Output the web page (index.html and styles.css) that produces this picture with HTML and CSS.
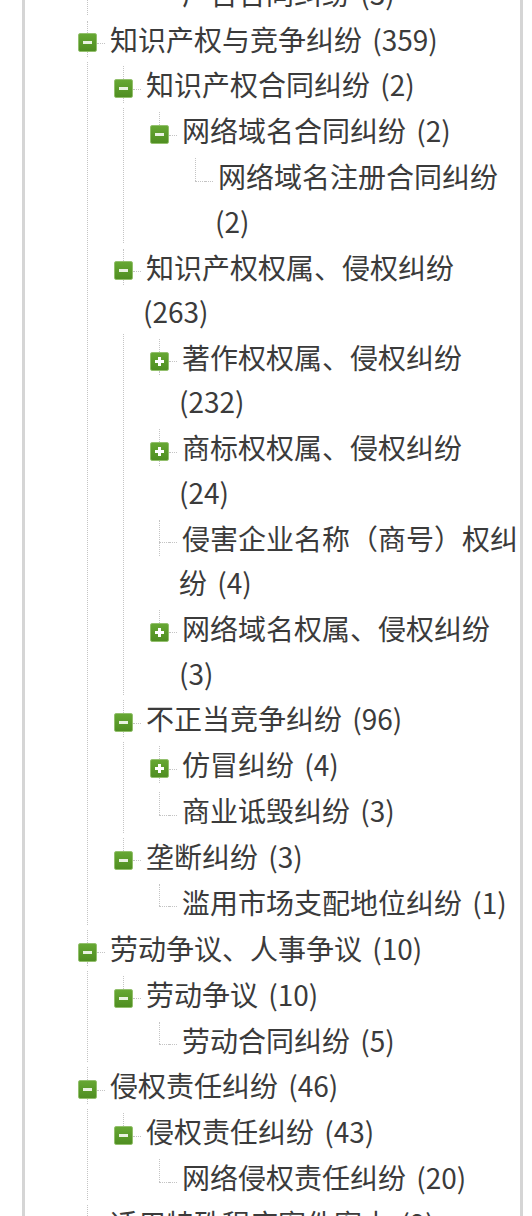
FILE: index.html
```html
<!DOCTYPE html>
<html lang="zh-CN">
<head>
<meta charset="utf-8">
<title>案由树</title>
<link rel="stylesheet" href="styles.css">
</head>
<body>
<div class="panel">
<ul class="tree">
  <li class="node">
    <ul class="line">
      <li class="node last">
        <ul>
          <li class="node leaf last"><div class="row"><span class="sw"><i class="up"></i><i class="mid"></i><i class="dn"></i></span><span class="h"></span><span class="txt">广告合同纠纷 (3)</span></div></li>
        </ul>
      </li>
    </ul>
  </li>

  <li class="node">
    <div class="row"><span class="sw"><i class="up"></i><b class="box minus"></b><i class="dn"></i></span><span class="h"></span><span class="txt">知识产权与竞争纠纷 (359)</span></div>
    <ul class="line">
      <li class="node">
        <div class="row"><span class="sw"><i class="up"></i><b class="box minus"></b><i class="dn"></i></span><span class="h"></span><span class="txt">知识产权合同纠纷 (2)</span></div>
        <ul class="line">
          <li class="node last">
            <div class="row"><span class="sw"><i class="up"></i><b class="box minus"></b><i class="dn"></i></span><span class="h"></span><span class="txt">网络域名合同纠纷 (2)</span></div>
            <ul>
              <li class="node leaf last"><div class="row"><span class="sw"><i class="up"></i><i class="mid"></i><i class="dn"></i></span><span class="h"></span><span class="txt">网络域名注册合同纠纷 (2)</span></div></li>
            </ul>
          </li>
        </ul>
      </li>
      <li class="node">
        <div class="row"><span class="sw"><i class="up"></i><b class="box minus"></b><i class="dn"></i></span><span class="h"></span><span class="txt">知识产权权属、侵权纠纷 (263)</span></div>
        <ul class="line">
          <li class="node"><div class="row"><span class="sw"><i class="up"></i><b class="box plus"></b><i class="dn"></i></span><span class="h"></span><span class="txt">著作权权属、侵权纠纷 (232)</span></div></li>
          <li class="node"><div class="row"><span class="sw"><i class="up"></i><b class="box plus"></b><i class="dn"></i></span><span class="h"></span><span class="txt">商标权权属、侵权纠纷 (24)</span></div></li>
          <li class="node leaf"><div class="row"><span class="sw"><i class="up"></i><i class="mid"></i><i class="dn"></i></span><span class="h"></span><span class="txt">侵害企业名称（商号）权纠纷 (4)</span></div></li>
          <li class="node last"><div class="row"><span class="sw"><i class="up"></i><b class="box plus"></b><i class="dn"></i></span><span class="h"></span><span class="txt">网络域名权属、侵权纠纷 (3)</span></div></li>
        </ul>
      </li>
      <li class="node">
        <div class="row"><span class="sw"><i class="up"></i><b class="box minus"></b><i class="dn"></i></span><span class="h"></span><span class="txt">不正当竞争纠纷 (96)</span></div>
        <ul class="line">
          <li class="node"><div class="row"><span class="sw"><i class="up"></i><b class="box plus"></b><i class="dn"></i></span><span class="h"></span><span class="txt">仿冒纠纷 (4)</span></div></li>
          <li class="node leaf last"><div class="row"><span class="sw"><i class="up"></i><i class="mid"></i><i class="dn"></i></span><span class="h"></span><span class="txt">商业诋毁纠纷 (3)</span></div></li>
        </ul>
      </li>
      <li class="node last">
        <div class="row"><span class="sw"><i class="up"></i><b class="box minus"></b><i class="dn"></i></span><span class="h"></span><span class="txt">垄断纠纷 (3)</span></div>
        <ul>
          <li class="node leaf last"><div class="row"><span class="sw"><i class="up"></i><i class="mid"></i><i class="dn"></i></span><span class="h"></span><span class="txt">滥用市场支配地位纠纷 (1)</span></div></li>
        </ul>
      </li>
    </ul>
  </li>

  <li class="node">
    <div class="row"><span class="sw"><i class="up"></i><b class="box minus"></b><i class="dn"></i></span><span class="h"></span><span class="txt">劳动争议、人事争议 (10)</span></div>
    <ul class="line">
      <li class="node last">
        <div class="row"><span class="sw"><i class="up"></i><b class="box minus"></b><i class="dn"></i></span><span class="h"></span><span class="txt">劳动争议 (10)</span></div>
        <ul>
          <li class="node leaf last"><div class="row"><span class="sw"><i class="up"></i><i class="mid"></i><i class="dn"></i></span><span class="h"></span><span class="txt">劳动合同纠纷 (5)</span></div></li>
        </ul>
      </li>
    </ul>
  </li>

  <li class="node">
    <div class="row"><span class="sw"><i class="up"></i><b class="box minus"></b><i class="dn"></i></span><span class="h"></span><span class="txt">侵权责任纠纷 (46)</span></div>
    <ul class="line">
      <li class="node last">
        <div class="row"><span class="sw"><i class="up"></i><b class="box minus"></b><i class="dn"></i></span><span class="h"></span><span class="txt">侵权责任纠纷 (43)</span></div>
        <ul>
          <li class="node leaf last"><div class="row"><span class="sw"><i class="up"></i><i class="mid"></i><i class="dn"></i></span><span class="h"></span><span class="txt">网络侵权责任纠纷 (20)</span></div></li>
        </ul>
      </li>
    </ul>
  </li>

  <li class="node">
    <div class="row"><span class="sw"><i class="up"></i><b class="box plus"></b><i class="dn"></i></span><span class="h"></span><span class="txt">适用特殊程序案件案由 (9)</span></div>
  </li>
</ul>
</div>
</body>
</html>
```
FILE: styles.css
```css
* { box-sizing: border-box; }

html, body {
  margin: 0;
  padding: 0;
  background: #ffffff;
}

body {
  font-family: "Noto Sans CJK SC", "Noto Sans", sans-serif;
  font-size: 28px;
  color: #3b3b3b;
  overflow: hidden;
}

.panel {
  display: flow-root;
  margin-left: 22px;
  width: 501px;
  min-height: 1216px;
  border-left: 3px solid #d5d5d5;
  border-right: 3px solid #d5d5d5;
}

.tree {
  list-style: none;
  margin: -30px 0 0;
  padding: 0 0 0 53px;
}

.tree ul {
  list-style: none;
  margin: 0;
  padding: 0 0 0 36px;
}

.tree ul.line {
  background-image: linear-gradient(#c4c4c4 50%, transparent 50%);
  background-size: 1px 2px;
  background-repeat: repeat-y;
  background-position: 9px 0;
}

.row {
  display: flex;
  align-items: flex-start;
  padding: 0.7px 0;
  line-height: 44.5px;
}

.sw {
  flex: none;
  width: 19px;
  height: 44.5px;
  display: flex;
  flex-direction: column;
}

.up {
  flex: none;
  width: 0;
  height: 12.9px;
  margin: 4px 0 0 9px;
  border-left: 1px dotted #c4c4c4;
}

.dn {
  flex: 1;
  width: 0;
  margin: 0 0 4px 9px;
  border-left: 1px dotted #c4c4c4;
}

.last > .row .dn {
  border-left-color: transparent;
}

.leaf .up {
  height: 22.4px;
}

.mid {
  flex: none;
  width: 10px;
  height: 0;
  margin-left: 9px;
  border-top: 1px dotted #c4c4c4;
}

.box {
  flex: none;
  width: 19px;
  height: 19px;
  border: 1px solid #93c06d;
  border-radius: 2px;
}

.box.minus {
  background:
    linear-gradient(#e9f2e1, #e9f2e1) center / 9px 3px no-repeat,
    linear-gradient(#66a733, #4f8e21);
}

.box.plus {
  background:
    linear-gradient(#ffffff, #ffffff) center / 9px 3px no-repeat,
    linear-gradient(#ffffff, #ffffff) center / 3px 9px no-repeat,
    linear-gradient(#66a733, #4f8e21);
}

.h {
  flex: none;
  width: 8px;
  height: 0;
  margin-top: 26.4px;
  border-top: 1px dotted #c4c4c4;
}

.txt {
  flex: 1;
  min-width: 0;
  margin-left: 2px;
  text-indent: 3px;
  word-spacing: 4px;
}
```
